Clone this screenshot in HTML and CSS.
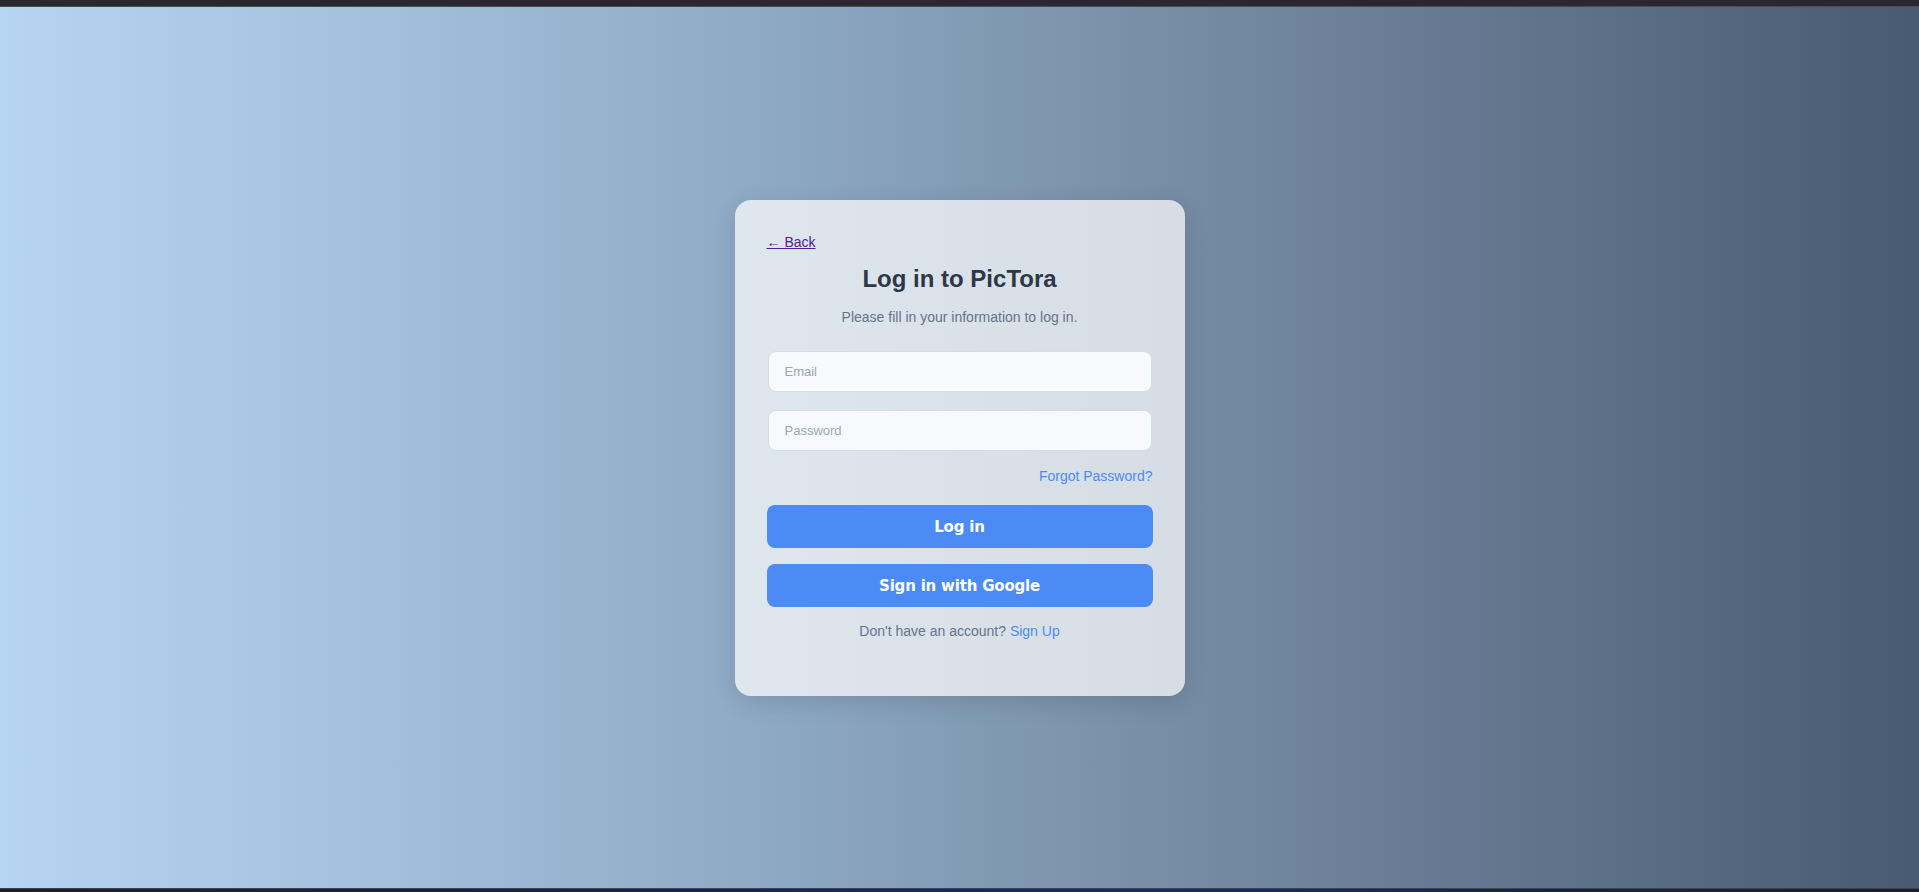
FILE: index.html
```html
<!DOCTYPE html>
<html lang="en">
<head>
<meta charset="utf-8">
<title>Log in to PicTora</title>
<link rel="stylesheet" href="styles.css">
</head>
<body>
<div class="topbar"></div>
<main class="stage">
  <div class="card">
    <a class="back" href="#">&larr; Back</a>
    <h1 class="title">Log in to PicTora</h1>
    <p class="subtitle">Please fill in your information to log in.</p>
    <input class="field" type="email" placeholder="Email">
    <input class="field" type="password" placeholder="Password">
    <div class="forgot-row"><a class="link" href="#">Forgot Password?</a></div>
    <button class="btn">Log in</button>
    <button class="btn">Sign in with Google</button>
    <p class="signup">Don't have an account? <a class="link" href="#">Sign Up</a></p>
  </div>
</main>
<div class="bottombar"></div>
</body>
</html>
```
FILE: styles.css
```css
html, body {
  margin: 0;
  padding: 0;
  height: 100%;
}
body {
  font-family: "Liberation Sans", Arial, sans-serif;
  display: flex;
  flex-direction: column;
  background: #1e2230;
  overflow: hidden;
}
.topbar {
  height: 6px;
  background: #2a2731;
  border-bottom: 1px solid #4b4a55;
  flex: none;
}
.stage {
  height: 881px;
  flex: none;
  background: linear-gradient(to right, #b6d5f3 0%, #8ea9c4 40%, #6c8199 70%, #475a71 100%);
  display: flex;
  align-items: center;
  justify-content: center;
}
.bottombar {
  flex: 1;
  border-top: 1px solid #3c4250;
  background: linear-gradient(to right, #1c2028 0%, #1a2450 40%, #1b2a66 60%, #1a2236 85%, #1a1f2a 100%);
}
.card {
  box-sizing: border-box;
  width: 450px;
  height: 496px;
  margin-top: 1px;
  padding: 34px 32px 0;
  border-radius: 16px;
  background: rgba(255, 255, 255, 0.7);
  box-shadow: 0 6px 24px rgba(0, 0, 0, 0.12);
  display: flex;
  flex-direction: column;
}
.back {
  align-self: flex-start;
  font-size: 14px;
  line-height: 16px;
  color: #551a8b;
  text-decoration: underline;
}
.title {
  margin: 15px 0 0;
  text-align: center;
  font-size: 24px;
  line-height: 28px;
  font-weight: 700;
  color: #2d3748;
}
.subtitle {
  margin: 16px 0 0;
  text-align: center;
  font-size: 14px;
  line-height: 16px;
  color: #64748b;
}
.field {
  box-sizing: border-box;
  height: 41px;
  margin: 0 1px;
  padding: 0 16px;
  border: 1px solid #d6dde6;
  border-radius: 8px;
  background: #f7f9fc;
  font-family: "Liberation Sans", Arial, sans-serif;
  font-size: 13px;
  color: #2d3748;
  outline: none;
}
.field:first-of-type {
  margin-top: 26px;
}
.field + .field {
  margin-top: 18px;
}
.field::placeholder {
  color: #9ba6b8;
}
.forgot-row {
  margin-top: 17px;
  text-align: right;
  font-size: 14px;
  line-height: 16px;
}
.link {
  color: #4c8bf5;
  text-decoration: none;
}
.btn {
  height: 43px;
  margin-top: 21px;
  border: none;
  border-radius: 8px;
  background: #4c8bf5;
  color: #ffffff;
  font-family: "DejaVu Sans", Verdana, sans-serif;
  font-weight: 700;
  font-size: 15px;
  letter-spacing: -0.2px;
  cursor: pointer;
}
.btn + .btn {
  margin-top: 16px;
}
.signup {
  margin: 16px 0 0;
  text-align: center;
  font-size: 14px;
  line-height: 16px;
  color: #64748b;
}
```
